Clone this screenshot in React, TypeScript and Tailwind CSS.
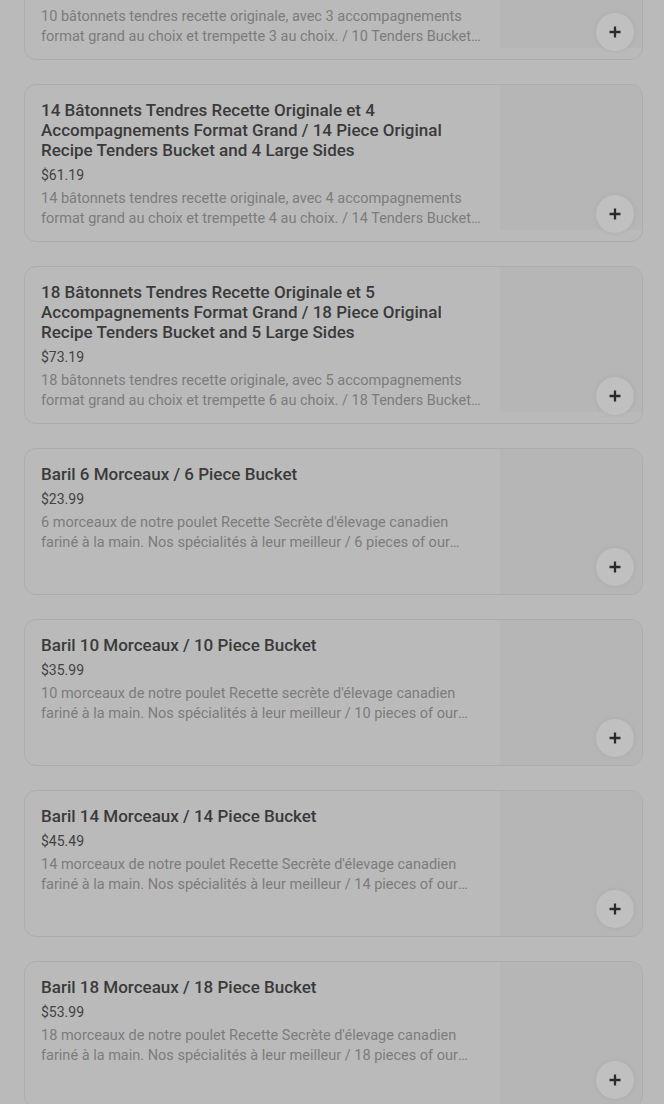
import React from 'react';

type Item = { title: string; price?: string; desc: string };

const items: Item[] = [
  {
    title: '10 Bâtonnets Tendres Recette Originale et 3 Accompagnements Format Grand / 10 Piece Original Recipe Tenders Bucket and 3 Large Sides',
    price: '$52.19',
    desc: '10 bâtonnets tendres recette originale, avec 3 accompagnements format grand au choix et trempette 3 au choix. / 10 Tenders Bucket with 3 large sides and 3 dips of your choice.',
  },
  {
    title: '14 Bâtonnets Tendres Recette Originale et 4 Accompagnements Format Grand / 14 Piece Original Recipe Tenders Bucket and 4 Large Sides',
    price: '$61.19',
    desc: '14 bâtonnets tendres recette originale, avec 4 accompagnements format grand au choix et trempette 4 au choix. / 14 Tenders Bucket with 4 large sides and 4 dips of your choice.',
  },
  {
    title: '18 Bâtonnets Tendres Recette Originale et 5 Accompagnements Format Grand / 18 Piece Original Recipe Tenders Bucket and 5 Large Sides',
    price: '$73.19',
    desc: '18 bâtonnets tendres recette originale, avec 5 accompagnements format grand au choix et trempette 6 au choix. / 18 Tenders Bucket with 5 large sides and 6 dips of your choice.',
  },
  {
    title: 'Baril 6 Morceaux / 6 Piece Bucket',
    price: '$23.99',
    desc: "6 morceaux de notre poulet Recette Secrète d'élevage canadien fariné à la main. Nos spécialités à leur meilleur / 6 pieces of our Secret Recipe Canadian-raised chicken, hand-breaded.",
  },
  {
    title: 'Baril 10 Morceaux / 10 Piece Bucket',
    price: '$35.99',
    desc: "10 morceaux de notre poulet Recette secrète d'élevage canadien fariné à la main. Nos spécialités à leur meilleur / 10 pieces of our Secret Recipe Canadian-raised chicken, hand-breaded.",
  },
  {
    title: 'Baril 14 Morceaux / 14 Piece Bucket',
    price: '$45.49',
    desc: "14 morceaux de notre poulet Recette Secrète d'élevage canadien fariné à la main. Nos spécialités à leur meilleur / 14 pieces of our Secret Recipe Canadian-raised chicken, hand-breaded.",
  },
  {
    title: 'Baril 18 Morceaux / 18 Piece Bucket',
    price: '$53.99',
    desc: "18 morceaux de notre poulet Recette Secrète d'élevage canadien fariné à la main. Nos spécialités à leur meilleur / 18 pieces of our Secret Recipe Canadian-raised chicken, hand-breaded.",
  },
];

// ── Plus button ──────────────────────────────────────────────────────────────
const AddButton = () => (
  <button className="absolute right-[8px] bottom-[8px] w-[38px] h-[38px] rounded-full bg-[#c0c0c0] shadow-[0_0_5px_rgba(0,0,0,0.07)] flex items-center justify-center">
    <svg width="14" height="14" viewBox="0 0 14 14">
      <path d="M7 1.5v11M1.5 7h11" stroke="#2a2a2a" strokeWidth="2.3" />
    </svg>
  </button>
);

// ── Menu card ────────────────────────────────────────────────────────────────
const MenuCard = ({ item }: { item: Item }) => (
  <div className="relative flex rounded-[12px] border border-[#adadad] bg-[#bababa] overflow-hidden min-h-[147px]">
    <div className="flex-1 min-w-0 px-[16px] pt-[15px] pb-[12px]">
      <h3 className="text-[17px] leading-[20px] font-medium text-[#3a3a3a]">{item.title}</h3>
      {item.price && <div className="mt-[5px] text-[14px] leading-[20px] text-[#424242]">{item.price}</div>}
      <p className="mt-[4px] text-[14.5px] leading-[20px] text-[#7c7c7c] line-clamp-2">{item.desc}</p>
    </div>
    <div className="w-[142px] shrink-0 h-[145px] bg-[#b6b6b6]" />
    <AddButton />
  </div>
);

export default function App() {
  return (
    <div className="min-h-screen bg-[#bababa] overflow-hidden" style={{ fontFamily: 'Roboto, "Noto Sans", sans-serif' }}>
      <div className="-mt-[98px] pl-[24px] pr-[21px] pb-[24px] flex flex-col gap-[24px]">
        {items.map((it, i) => (
          <MenuCard key={i} item={it} />
        ))}
      </div>
    </div>
  );
}
